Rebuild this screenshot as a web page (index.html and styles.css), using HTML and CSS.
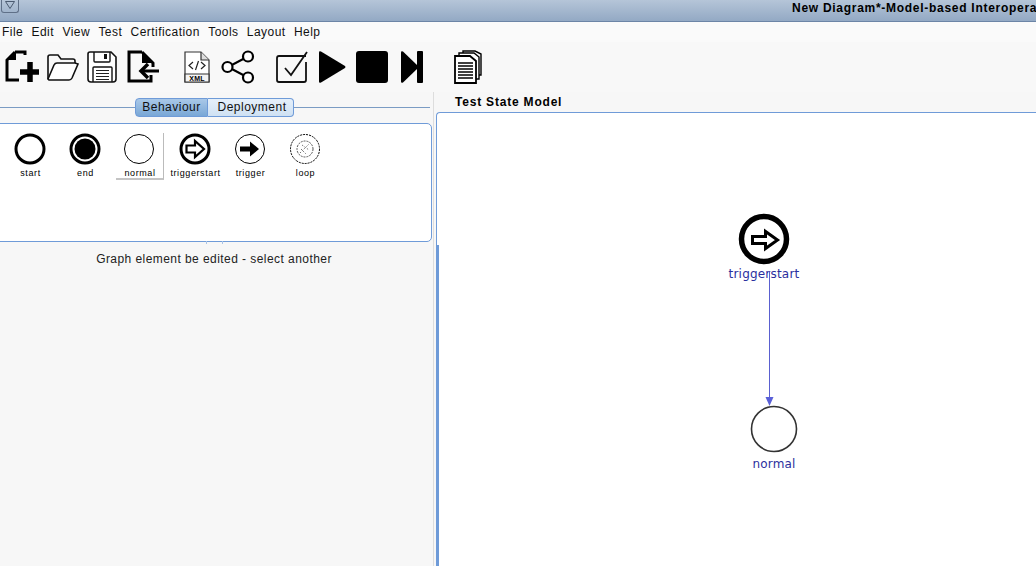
FILE: index.html
```html
<!DOCTYPE html>
<html>
<head>
  <title>New Diagram</title>
  <link rel="stylesheet" href="styles.css">
</head>
<body>

<div class="titlebar">
  <div class="win-btn">
    <svg width="14" height="10" viewBox="0 0 14 10"><path d="M2.5 1.5h9L7 8.5z" fill="none" stroke="#4a5a70"/></svg>
  </div>
  <div class="win-title">New Diagram*-Model-based Interopera</div>
</div>

<div class="menubar">
  <span>File</span><span>Edit</span><span>View</span><span>Test</span><span>Certification</span><span>Tools</span><span>Layout</span><span>Help</span>
</div>

<div class="toolbar">
  <svg class="tool tool-new" width="34" height="34" viewBox="0 0 34 34"><path d="M10 2h10v3M10 2L2 10v20h12" fill="none" stroke="#000" stroke-width="3"/><path d="M3 10l8-8v8z" fill="#000"/><path d="M25 12v20M15 22h19" stroke="#000" stroke-width="5.5"/></svg>
  <svg class="tool tool-open" width="33" height="34" viewBox="0 0 33 34"><path d="M2 29V7q0-2 2-2h8l3 4h12q2 0 2 2v3" fill="none" stroke="#111" stroke-width="1.6"/><path d="M2 29l6-14q1-2 3-2h18l3 1-6 14q-1 2-3 2H3z" fill="#fff" stroke="#111" stroke-width="1.6"/></svg>
  <svg class="tool tool-save" width="31" height="34" viewBox="0 0 31 34"><path d="M3 2h21l5 5v22q0 3-3 3H4q-3 0-3-3V4q0-2 2-2z" fill="#fff" stroke="#111" stroke-width="1.6"/><path d="M7 2v9q0 1 1 1h14q1 0 1-1V2" fill="none" stroke="#111" stroke-width="1.4"/><path d="M17 4h3v5h-3z" fill="#111"/><path d="M6 32V18q0-1 1-1h17q1 0 1 1v14" fill="none" stroke="#111" stroke-width="1.4"/><path d="M9 20.500h13M9 23.500h13M9 26.500h13M9 29.500h13" stroke="#222" stroke-width="1.2"/></svg>
  <svg class="tool tool-import" width="33" height="34" viewBox="0 0 33 34"><path d="M15 2H2v29h22v-6M15 2l11 11v4" fill="none" stroke="#000" stroke-width="3"/><path d="M15 2l11 11H15z" fill="#000"/><path d="M32 21H16" stroke="#000" stroke-width="3"/><path d="M21 14l-7 7 7 7" fill="none" stroke="#000" stroke-width="3.500"/></svg>
  <svg class="tool tool-xml" width="26" height="34" viewBox="0 0 26 34"><path d="M1 2h16l8 8v22H1z" fill="#fff" stroke="#333" stroke-width="1.2"/><path d="M17 2v8h8" fill="#ddd" stroke="#333" stroke-width="1.2"/><path d="M1 24h24v8H1z" fill="#f4f4f4" stroke="#333" stroke-width="1.2"/><path d="M9 12l-4 3.500 4 3.500M17 12l4 3.500-4 3.500M14.500 11l-3 9" fill="none" stroke="#222" stroke-width="1.2"/><text x="13" y="31" class="xml-text">XML</text></svg>
  <svg class="tool tool-share" width="34" height="34" viewBox="0 0 34 34"><path d="M7 17L26 7M7 17l19 10" stroke="#000" stroke-width="2"/><circle cx="6.500" cy="17" r="5" fill="#fff" stroke="#000" stroke-width="2.200"/><circle cx="27" cy="6.500" r="5" fill="#fff" stroke="#000" stroke-width="2.200"/><circle cx="27" cy="27.500" r="5" fill="#fff" stroke="#000" stroke-width="2.200"/></svg>
  <svg class="tool tool-check" width="33" height="34" viewBox="0 0 33 34"><path d="M30 6H3q-2 0-2 2v22q0 2 2 2h25q2 0 2-2V12" fill="none" stroke="#111" stroke-width="1.800"/><path d="M9 18l6 7L31 2" fill="none" stroke="#111" stroke-width="1.800"/></svg>
  <svg class="tool tool-play" width="28" height="34" viewBox="0 0 28 34"><path d="M1 2.500q0-2 2-1L27 16q1 1 0 2L3 32.500q-2 1-2-1z" fill="#000"/></svg>
  <svg class="tool tool-stop" width="32" height="34" viewBox="0 0 32 34"><rect y="1" width="32" height="32" rx="3" fill="#000"/></svg>
  <svg class="tool tool-step" width="22" height="34" viewBox="0 0 22 34"><path d="M0 2.500q0-2 2-1L16 15v4L2 32.500q-2 1-2-1z" fill="#000"/><rect x="16" y="1" width="6" height="32" rx="1" fill="#000"/></svg>
  <svg class="tool tool-docs" width="28" height="34" viewBox="0 0 28 34"><path d="M9 3V1h12l6 3v21h-3" fill="none" stroke="#000" stroke-width="1.400"/><path d="M5 6V3h15l5 4v22h-3" fill="#fff" stroke="#000" stroke-width="1.400"/><path d="M1 6h15l6 5v22H1z" fill="#fff" stroke="#000" stroke-width="1.800"/><path d="M4 13h15M4 16h15M4 19h15M4 22h15M4 25h15M4 28h15" stroke="#000" stroke-width="1.300"/></svg>
</div>

<div class="main">
  <div class="left">
    <div class="tabs-row">
      <div class="tabs">
        <div class="tab tab-on">Behaviour</div>
        <div class="tab tab-deploy">Deployment</div>
      </div>
    </div>

    <div class="palette">
      <div class="pal-item">
        <svg width="32" height="32" viewBox="0 0 32 32"><circle cx="16" cy="16" r="14" fill="#fff" stroke="#000" stroke-width="3"/></svg>
        <span>start</span>
      </div>
      <div class="pal-item">
        <svg width="32" height="32" viewBox="0 0 32 32"><circle cx="16" cy="16" r="14" fill="#fff" stroke="#000" stroke-width="3"/><circle cx="16" cy="16" r="10.500" fill="#000"/></svg>
        <span>end</span>
      </div>
      <div class="pal-item pal-selected">
        <svg width="32" height="32" viewBox="0 0 32 32"><circle cx="16" cy="16" r="14.500" fill="#fff" stroke="#000" stroke-width="1"/></svg>
        <span>normal</span>
      </div>
      <div class="pal-item">
        <svg width="32" height="32" viewBox="0 0 32 32"><circle cx="16" cy="16" r="14" fill="#fff" stroke="#000" stroke-width="3"/><path d="M7.500 12.500h8.500V8l9 8-9 8v-4.500H7.500z" fill="#fff" stroke="#000" stroke-width="2.200"/></svg>
        <span>triggerstart</span>
      </div>
      <div class="pal-item">
        <svg width="32" height="32" viewBox="0 0 32 32"><circle cx="16" cy="16" r="14.500" fill="#fff" stroke="#000" stroke-width="1"/><path d="M6 13.500h10V8.500l9 7.500-9 7.500v-5H6z" fill="#000"/></svg>
        <span>trigger</span>
      </div>
      <div class="pal-item">
        <svg width="32" height="32" viewBox="0 0 32 32"><circle cx="16" cy="16" r="14.500" fill="#fff" stroke="#000" stroke-width="1" stroke-dasharray="2 1"/><circle cx="16" cy="16" r="8" fill="none" stroke="#555" stroke-width="1" stroke-dasharray="2 1"/><path d="M11 20l9-9M13 12l7 5M12 16l5 5" stroke="#777" stroke-width="1" stroke-dasharray="1.500 1.500"/></svg>
        <span>loop</span>
      </div>
    </div>

    <div class="pal-tick"></div>
    <div class="message">Graph element be edited - select another</div>
  </div>

  <div class="divider"></div>

  <div class="right">
    <div class="model-title">Test State Model</div>
    <div class="canvas">
      <svg class="edge" width="20" height="140" viewBox="0 0 20 140"><path d="M10.500 0v130" stroke="#5a60d0" stroke-width="1"/><path d="M6.500 125h8l-4 9z" fill="#5a60d8"/></svg>
      <div class="node node-trigger">
        <svg width="52" height="52" viewBox="0 0 52 52"><circle cx="26" cy="26" r="22.500" fill="#fff" stroke="#000" stroke-width="5.500"/><path d="M14.500 23.500h13V18.500l12 8.500-12 8.500V30.500h-13z" fill="#fff" stroke="#000" stroke-width="3"/></svg>
        <span>triggerstart</span>
      </div>
      <div class="node node-normal">
        <svg width="48" height="48" viewBox="0 0 48 48"><circle cx="24" cy="24" r="22.500" fill="#fff" stroke="#333" stroke-width="1.600"/></svg>
        <span>normal</span>
      </div>
    </div>
  </div>
</div>

</body>
</html>
```

FILE: styles.css
```css
html, body {
  margin: 0;
  height: 100%;
  overflow: hidden;
}

body {
  background-color: #f7f7f7;
  color: #111;
  font-family: "Liberation Sans", Arial, sans-serif;
  font-size: 12px;
  display: flex;
  flex-direction: column;
}

.titlebar {
  height: 22px;
  box-sizing: border-box;
  flex: none;
  display: flex;
  background: linear-gradient(#b5c5d8, #93a9c4);
  border-bottom: 1px solid #6c85a6;
  overflow: hidden;
}

.win-btn {
  width: 18px;
  height: 13px;
  box-sizing: border-box;
  border: 1px solid #5f7088;
  border-top: none;
  border-radius: 0 0 3px 3px;
  margin-left: 1px;
  padding-left: 1px;
  flex: none;
}

.win-btn svg {
  display: block;
}

.win-title {
  margin-left: 773px;
  white-space: nowrap;
  font-weight: bold;
  letter-spacing: 0.72px;
  color: #000;
  line-height: 17px;
}

.menubar {
  height: 20px;
  flex: none;
  display: flex;
  align-items: center;
  gap: 8.4px;
  padding-left: 2px;
  letter-spacing: 0.45px;
  background: #fafafa;
}

.toolbar {
  height: 50px;
  flex: none;
  display: flex;
  align-items: center;
  padding-left: 5px;
  padding-bottom: 1px;
  box-sizing: border-box;
  background: #f8f8f8;
}

.tool {
  flex: none;
  display: block;
}

.tool-open { margin-left: 7px; }
.tool-save { margin-left: 8px; }
.tool-import { margin-left: 9px; }
.tool-xml { margin-left: 24px; }
.tool-share { margin-left: 11px; }
.tool-check { margin-left: 21px; }
.tool-play { margin-left: 9px; }
.tool-stop { margin-left: 10px; }
.tool-step { margin-left: 13px; }
.tool-docs { margin-left: 31px; }

.xml-text {
  font-family: "Liberation Sans", Arial, sans-serif;
  font-size: 7px;
  font-weight: bold;
  text-anchor: middle;
  letter-spacing: 0.3px;
}

.main {
  flex: 1;
  display: flex;
  min-height: 0;
}

.left {
  width: 433px;
  flex: none;
  position: relative;
}

.tabs-row {
  height: 31px;
  padding-top: 6px;
  box-sizing: border-box;
  display: flex;
  justify-content: center;
  margin-right: 3px;
  background: linear-gradient(transparent 15px, #7b9cc4 15px, #7b9cc4 16px, transparent 16px);
}

.tabs {
  display: flex;
  height: 19px;
  margin-left: -1px;
}

.tab {
  box-sizing: border-box;
  height: 19px;
  width: 86px;
  border: 1px solid #6f9bd8;
  border-left: none;
  border-radius: 0 4px 4px 0;
  background: linear-gradient(#e6f0fa, #cfe1f3);
  text-align: center;
  line-height: 17px;
  letter-spacing: 0.5px;
}

.tab-deploy {
  padding-left: 3px;
}

.tab-on {
  width: 73px;
  border-left: 1px solid #6f9bd8;
  border-radius: 4px 0 0 4px;
  background: linear-gradient(#a9c8e8, #79a7d6);
}

.palette {
  height: 119px;
  box-sizing: border-box;
  margin-left: -6px;
  margin-right: 1px;
  border: 1px solid #6f9bd8;
  border-radius: 5px;
  background: #fff;
  display: flex;
  align-items: flex-start;
  padding-left: 7px;
  padding-top: 9px;
}

.pal-item {
  width: 55px;
  flex: none;
  box-sizing: border-box;
  height: 47px;
  display: flex;
  flex-direction: column;
  align-items: center;
  font-size: 9px;
  letter-spacing: 0.6px;
  color: #000;
}

.pal-item svg {
  display: block;
  margin-bottom: 3px;
}

.pal-item span {
  padding-left: 2px;
}

.pal-selected {
  width: 48px;
  margin: 0 3.5px;
  border-right: 1px solid #bbb;
  border-bottom: 2px solid #c4c4c4;
}

/* leftover tick under the palette */
.pal-tick {
  position: absolute;
  left: 206px;
  top: 149px;
  width: 17px;
  height: 3px;
  box-sizing: border-box;
  border-left: 1px solid #a9c4e6;
  border-right: 1px solid #a9c4e6;
}

.message {
  text-align: center;
  margin-top: 10px;
  line-height: 14px;
  letter-spacing: 0.44px;
  padding-right: 5px;
  color: #222;
}

.divider {
  width: 3px;
  flex: none;
  box-sizing: border-box;
  border-left: 1px solid #ddd;
}

.right {
  flex: 1;
  min-width: 0;
  display: flex;
  flex-direction: column;
}

.model-title {
  height: 20px;
  flex: none;
  box-sizing: border-box;
  padding-left: 19px;
  padding-top: 3px;
  font-weight: bold;
  letter-spacing: 0.8px;
  color: #000;
  line-height: 14px;
}

.canvas {
  flex: 1;
  position: relative;
  background: #fff;
  border-top: 1px solid #6f9bd8;
  border-left: 1px solid #6f9bd8;
  border-radius: 4px 0 0 0;
  overflow: hidden;
}

.canvas::before {
  content: "";
  position: absolute;
  left: -1px;
  top: 132px;
  bottom: 0;
  width: 3px;
  background: #6f9bd8;
}

.edge {
  position: absolute;
  left: 322px;
  top: 159px;
}

.node {
  position: absolute;
  display: flex;
  flex-direction: column;
  align-items: center;
  width: 100px;
  font-family: "DejaVu Sans", sans-serif;
  font-size: 12px;
  letter-spacing: 0.2px;
  color: #2b2f9e;
  line-height: 14px;
}

.node svg {
  display: block;
}

.node-trigger {
  left: 277px;
  top: 100px;
}

.node-trigger span {
  margin-top: 2px;
}

.node-normal {
  left: 287px;
  top: 292px;
}

.node-normal span {
  margin-top: 4px;
}
```
